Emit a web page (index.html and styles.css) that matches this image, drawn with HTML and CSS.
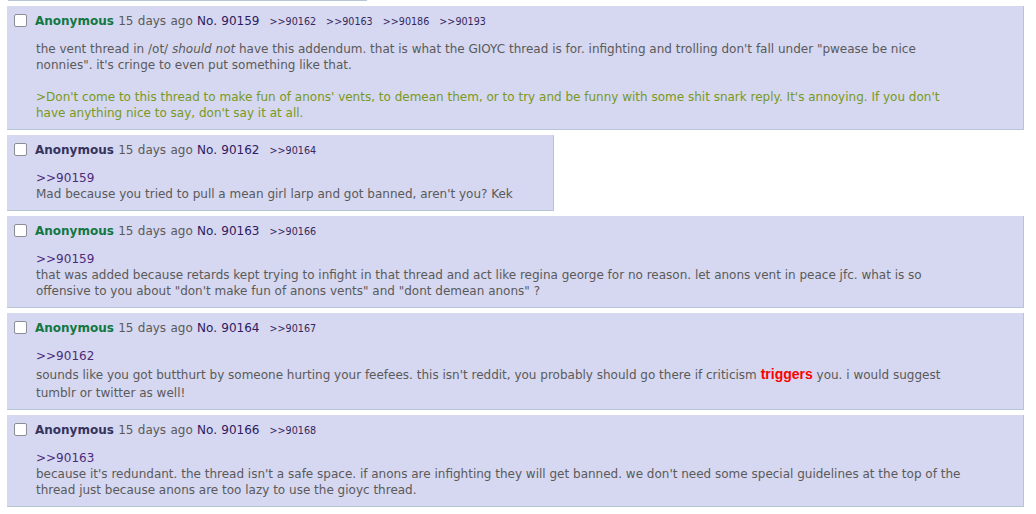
FILE: index.html
```html
<!DOCTYPE html>
<html>
<head>
<meta charset="utf-8">
<title>Thread</title>
<link rel="stylesheet" href="styles.css">
</head>
<body>
<div class="thread">
  <div class="prev-edge"></div>

  <div class="post">
    <div class="intro"><span class="check"></span><span class="name">Anonymous</span> <span class="time">15 days ago</span> <a class="post-no">No. 90159</a><span class="backlinks"><a>&gt;&gt;90162</a><a>&gt;&gt;90163</a><a>&gt;&gt;90186</a><a>&gt;&gt;90193</a></span></div>
    <div class="body">
      <p>the vent thread in /ot/ <em>should not</em> have this addendum. that is what the GIOYC thread is for. infighting and trolling don't fall under "pwease be nice nonnies". it's cringe to even put something like that.</p>
      <p class="quote">&gt;Don't come to this thread to make fun of anons' vents, to demean them, or to try and be funny with some shit snark reply. It's annoying. If you don't have anything nice to say, don't say it at all.</p>
    </div>
  </div>

  <div class="post compact">
    <div class="intro"><span class="check"></span><span class="name dark">Anonymous</span> <span class="time">15 days ago</span> <a class="post-no">No. 90162</a><span class="backlinks"><a>&gt;&gt;90164</a></span></div>
    <div class="body">
      <a class="reflink">&gt;&gt;90159</a>
      <p>Mad because you tried to pull a mean girl larp and got banned, aren't you? Kek</p>
    </div>
  </div>

  <div class="post">
    <div class="intro"><span class="check"></span><span class="name">Anonymous</span> <span class="time">15 days ago</span> <a class="post-no">No. 90163</a><span class="backlinks"><a>&gt;&gt;90166</a></span></div>
    <div class="body">
      <a class="reflink">&gt;&gt;90159</a>
      <p>that was added because retards kept trying to infight in that thread and act like regina george for no reason. let anons vent in peace jfc. what is so offensive to you about "don't make fun of anons vents" and "dont demean anons" ?</p>
    </div>
  </div>

  <div class="post">
    <div class="intro"><span class="check"></span><span class="name">Anonymous</span> <span class="time">15 days ago</span> <a class="post-no">No. 90164</a><span class="backlinks"><a>&gt;&gt;90167</a></span></div>
    <div class="body">
      <a class="reflink">&gt;&gt;90162</a>
      <p>sounds like you got butthurt by someone hurting your feefees. this isn't reddit, you probably should go there if criticism <span class="trig">triggers</span> you. i would suggest tumblr or twitter as well!</p>
    </div>
  </div>

  <div class="post">
    <div class="intro"><span class="check"></span><span class="name dark">Anonymous</span> <span class="time">15 days ago</span> <a class="post-no">No. 90166</a><span class="backlinks"><a>&gt;&gt;90168</a></span></div>
    <div class="body">
      <a class="reflink">&gt;&gt;90163</a>
      <p>because it's redundant. the thread isn't a safe space. if anons are infighting they will get banned. we don't need some special guidelines at the top of the thread just because anons are too lazy to use the gioyc thread.</p>
    </div>
  </div>
</div>
</body>
</html>
```

FILE: styles.css
```css
html, body {
  margin: 0;
  padding: 0;
  background: #ffffff;
}

body {
  font-family: "DejaVu Sans", Verdana, sans-serif;
  font-size: 12px;
  line-height: 16px;
  color: #5a5a5a;
}

.thread {
  display: flex;
  flex-direction: column;
  align-items: flex-start;
  padding: 0 12px 0 7px;
}

.prev-edge {
  width: 359px;
  height: 0;
  border-bottom: 1px solid #b7c5d9;
  margin-left: 1px;
  margin-bottom: 5px;
}

.post {
  align-self: stretch;
  box-sizing: border-box;
  background: #d6d7f0;
  border-right: 1px solid #b7c5d9;
  border-bottom: 1px solid #b7c5d9;
  padding: 7px 4px 8px 6px;
  margin-bottom: 5px;
}

.post.compact {
  align-self: flex-start;
}

.intro {
  height: 16px;
  white-space: nowrap;
  word-spacing: 0.5px;
}

.check {
  display: inline-block;
  vertical-align: top;
  box-sizing: border-box;
  width: 13px;
  height: 13px;
  margin: 1px 8px 0 1px;
  background: #ffffff;
  border: 1px solid #8d8d95;
  border-radius: 2px;
}

.name {
  font-weight: bold;
  color: #117743;
}

.name.dark {
  color: #34345c;
}

.time {
  color: #5a5a5a;
}

.post-no {
  color: #2c2060;
}

.backlinks a {
  font-size: 9.6px;
  color: #34285e;
  margin-left: 10px;
}

.body {
  margin: 12px 0 0 23px;
  padding-right: 36px;
}

.body p {
  margin: 0;
  max-width: 930px;
}

.body p + p {
  margin-top: 16px;
}

.reflink {
  display: block;
  color: #4b2c7a;
}

.quote {
  color: #789922;
}

.trig {
  font-family: "Liberation Sans", Arial, sans-serif;
  font-weight: bold;
  font-size: 14px;
  line-height: 21px;
  color: #ff0000;
}
```
